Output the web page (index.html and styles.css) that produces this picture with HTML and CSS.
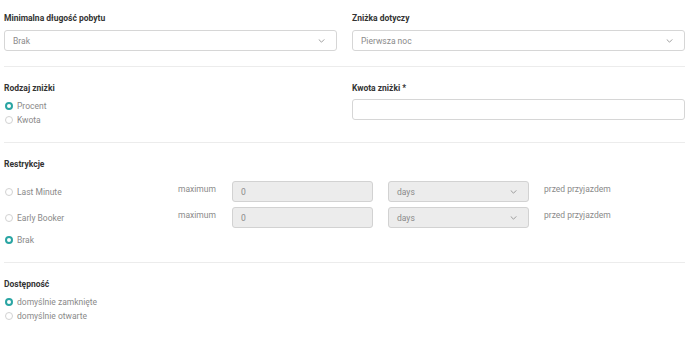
FILE: index.html
```html
<!DOCTYPE html>
<html lang="pl">
<head>
    <meta charset="UTF-8" />
    <title>Rabat</title>
    <link rel="stylesheet" href="styles.css">
</head>
<body>

<div class="form">
    <div class="row two-col">
        <div class="field">
            <label class="label">Minimalna długość pobytu</label>
            <div class="select">
                <span>Brak</span>
                <svg class="chevron" viewBox="0 0 8 5"><path d="M0.5 0.5 L4 4 L7.5 0.5" /></svg>
            </div>
        </div>
        <div class="field">
            <label class="label">Zniżka dotyczy</label>
            <div class="select">
                <span>Pierwsza noc</span>
                <svg class="chevron" viewBox="0 0 8 5"><path d="M0.5 0.5 L4 4 L7.5 0.5" /></svg>
            </div>
        </div>
    </div>

    <hr class="divider">

    <div class="row two-col">
        <div class="field">
            <label class="label">Rodzaj zniżki</label>
            <div class="radios">
                <div class="radio checked"><span class="dot"></span>Procent</div>
                <div class="radio"><span class="dot"></span>Kwota</div>
            </div>
        </div>
        <div class="field">
            <label class="label">Kwota zniżki *</label>
            <div class="input"></div>
        </div>
    </div>

    <hr class="divider">

    <div class="row">
        <label class="label">Restrykcje</label>
        <div class="restrictions">
            <div class="radio"><span class="dot"></span>Last Minute</div>
            <span class="hint">maximum</span>
            <div class="input disabled">0</div>
            <div class="select disabled">
                <span>days</span>
                <svg class="chevron" viewBox="0 0 8 5"><path d="M0.5 0.5 L4 4 L7.5 0.5" /></svg>
            </div>
            <span class="hint">przed przyjazdem</span>

            <div class="radio"><span class="dot"></span>Early Booker</div>
            <span class="hint">maximum</span>
            <div class="input disabled">0</div>
            <div class="select disabled">
                <span>days</span>
                <svg class="chevron" viewBox="0 0 8 5"><path d="M0.5 0.5 L4 4 L7.5 0.5" /></svg>
            </div>
            <span class="hint">przed przyjazdem</span>
        </div>
        <div class="radio checked brak"><span class="dot"></span>Brak</div>
    </div>

    <hr class="divider">

    <div class="row">
        <label class="label">Dostępność</label>
        <div class="radios">
            <div class="radio checked"><span class="dot"></span>domyślnie zamknięte</div>
            <div class="radio"><span class="dot"></span>domyślnie otwarte</div>
        </div>
    </div>
</div>

</body>
</html>
```

FILE: styles.css
```css
body {
    margin: 0;
    font-family: Roboto, "Liberation Sans", sans-serif;
    font-size: 8.5px;
    color: #8a8a8a;
    background-color: #fff;
}

.form {
    padding: 12px 3px 0 4px;
}

.two-col {
    display: grid;
    grid-template-columns: 1fr 1fr;
    column-gap: 15px;
}

.label {
    display: block;
    font-weight: bold;
    color: #333;
    line-height: 12px;
    margin-bottom: 6px;
}

.select,
.input {
    box-sizing: border-box;
    height: 21px;
    border: 1px solid #d6d6d6;
    border-radius: 3px;
    background-color: #fff;
    display: flex;
    align-items: center;
    justify-content: space-between;
    padding: 0 11px 0 8px;
    color: #8a8a8a;
}

.input.disabled,
.select.disabled {
    background-color: #ececec;
    border-color: #d2d2d2;
}

.chevron {
    width: 7px;
    height: 4px;
    fill: none;
    stroke: #888;
    stroke-width: 1;
}

.divider {
    border: none;
    border-top: 1px solid #ececec;
    margin: 15px 0 15px 0;
}

.field .input {
    margin-top: -1px;
}

.radios {
    margin-top: -1px;
}

.radio {
    display: flex;
    align-items: center;
    line-height: 14px;
    color: #8a8a8a;
}

.dot {
    box-sizing: border-box;
    width: 8px;
    height: 8px;
    border: 1px solid #d2d2d2;
    border-radius: 50%;
    margin: 0 4px 0 1px;
    background-color: #fff;
}

.radio.checked .dot {
    border: 2.5px solid #2aa5a3;
}

.restrictions {
    display: grid;
    grid-template-columns: 174px 54px 156px 156px 1fr;
    row-gap: 5px;
    align-items: start;
}

.restrictions .radio {
    height: 21px;
}

.restrictions .input,
.restrictions .select {
    width: 141px;
    height: 21px;
}

.hint {
    line-height: 12px;
    margin-top: 2px;
}

.brak {
    margin-top: 5px;
}

.row > .label + .restrictions {
    margin-top: 11px;
}
```
